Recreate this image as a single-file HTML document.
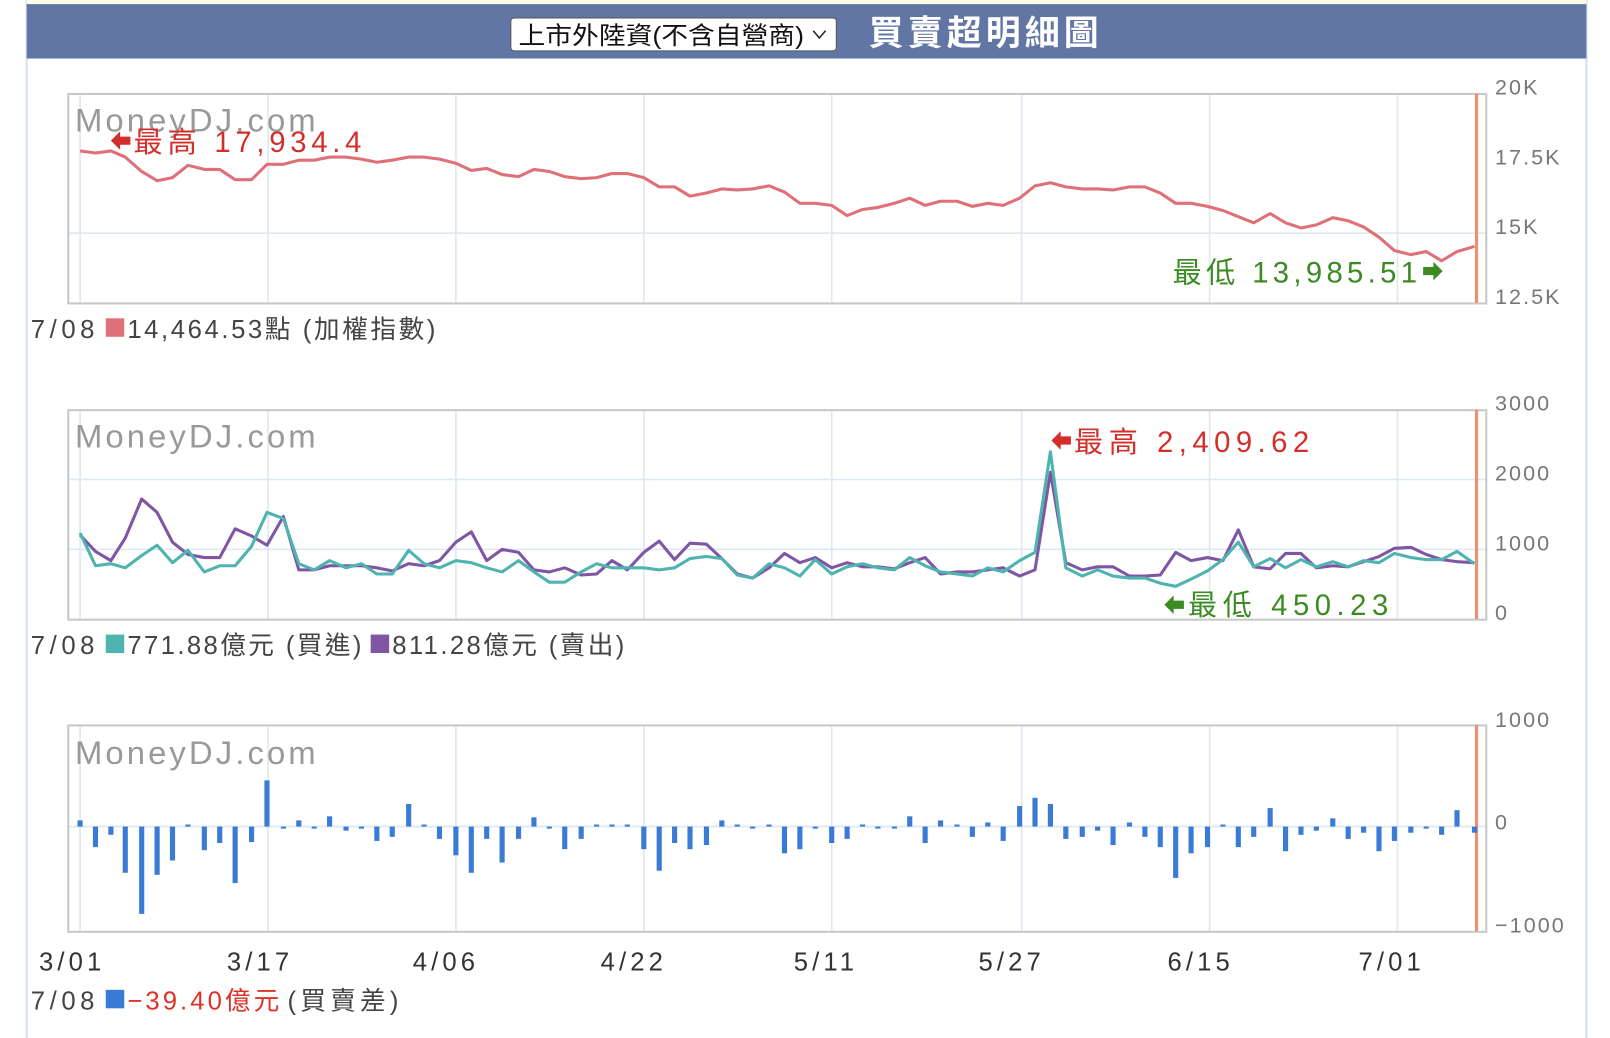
<!DOCTYPE html>
<html><head><meta charset="utf-8"><style>
html,body{margin:0;background:#fff;width:1610px;height:1038px;overflow:hidden;font-family:"Liberation Sans","Noto Sans CJK TC",sans-serif}
svg{position:absolute;left:0;top:0}
</style></head><body>
<svg id="s" width="1610" height="1038" xmlns="http://www.w3.org/2000/svg" font-family="Liberation Sans, Noto Sans CJK TC, sans-serif">
<g transform="scale(1.0268)">
<rect x="26" y="0" width="1519" height="1038" fill="#fff" stroke="#cfe0ee" stroke-width="2"/>
<rect x="26" y="0" width="1519" height="4" fill="#fffbe6"/>
<rect x="26" y="4" width="1519" height="53" fill="#6276a5"/>
<rect x="497.5" y="17.5" width="317" height="32" rx="3" fill="#fff" stroke="#555"/>
<text x="505" y="43" font-size="24" fill="#111" textLength="278" lengthAdjust="spacingAndGlyphs">上市外陸資(不含自營商)</text>
<path d="M792 30l6 7 6-7" fill="none" stroke="#222" stroke-width="1.5"/>
<text x="846" y="44" font-size="34" font-weight="bold" fill="#fff" textLength="224" lengthAdjust="spacing">買賣超明細圖</text>
<g id="grid"></g>
<g font-size="21" fill="#777" letter-spacing="2">
<text x="1456" y="92">20K</text><text x="1456" y="160">17.5K</text><text x="1456" y="228">15K</text><text x="1456" y="296">12.5K</text>
<text x="1456" y="400">3000</text><text x="1456" y="468">2000</text><text x="1456" y="536">1000</text><text x="1456" y="604">0</text>
<text x="1456" y="708">1000</text><text x="1456" y="808">0</text><text x="1456" y="908">−1000</text>
</g>
<g font-size="32" fill="#999" letter-spacing="3"><text x="73" y="128">MoneyDJ.com</text><text x="73" y="436">MoneyDJ.com</text><text x="73" y="744">MoneyDJ.com</text></g>
<g id="lines"></g>
<g font-size="28.5" lengthAdjust="spacing">
<path d="M108 137l9-9v5h10v8h-10v5z" fill="#d32f2a"/><text x="130" y="148" fill="#d32f2a" textLength="222">最高 17,934.4</text>
<text x="1142" y="275" fill="#3b8a22" textLength="238">最低 13,985.51</text><path d="M1405 264l-9-9v5h-10v8h10v5z" fill="#3b8a22"/>
<path d="M1024 429l9-9v5h10v8h-10v5z" fill="#d32f2a"/><text x="1046" y="440" fill="#d32f2a" textLength="229">最高 2,409.62</text>
<path d="M1134 589l9-9v5h10v8h-10v5z" fill="#3b8a22"/><text x="1157" y="599" fill="#3b8a22" textLength="195">最低 450.23</text>
</g>
<g font-size="25" fill="#333" letter-spacing="4">
<text x="38" y="945">3/01</text><text x="221" y="945">3/17</text><text x="402" y="945">4/06</text><text x="585" y="945">4/22</text><text x="773" y="945">5/11</text><text x="953" y="945">5/27</text><text x="1137" y="945">6/15</text><text x="1323" y="945">7/01</text>
</g>
<g font-size="25" fill="#444">
<text x="30" y="329" textLength="62">7/08</text><rect x="103" y="310" width="18" height="18" fill="#e07078"/><text x="124" y="329" textLength="300">14,464.53點 (加權指數)</text>
<text x="30" y="637" textLength="62">7/08</text><rect x="103" y="618" width="18" height="18" fill="#4fb3b0"/><text x="124" y="637" textLength="228">771.88億元 (買進)</text><rect x="361" y="618" width="18" height="18" fill="#7f56a3"/><text x="382" y="637" textLength="226">811.28億元 (賣出)</text>
<text x="30" y="983" textLength="62">7/08</text><rect x="103" y="964" width="18" height="18" fill="#3a7bd5"/><text x="124" y="983" fill="#e03025" textLength="148">−39.40億元</text><text x="280" y="983" textLength="108">(買賣差)</text>
</g>
</g>
</svg>
<script>
var NS="http://www.w3.org/2000/svg",g=document.getElementById('grid'),L=document.getElementById('lines');
function el(p,t,a){var e=document.createElementNS(NS,t);for(var k in a)e.setAttribute(k,a[k]);p.appendChild(e);return e}
var vx=[78,261,444,627,810,995,1178,1361];
[[91,295,[227]],[399,603,[467,535]],[706,907,[805]]].forEach(function(c){
 c[2].forEach(function(y){el(g,'line',{x1:66,x2:1448,y1:y,y2:y,stroke:'#dbe7f1','stroke-width':1.5})});
 vx.forEach(function(x){el(g,'line',{x1:x,x2:x,y1:c[0],y2:c[1],stroke:'#dbe7f1','stroke-width':1.5})});
 el(g,'rect',{x:66.5,y:c[0]+.5,width:1381,height:c[1]-c[0],fill:'none',stroke:'#c8c8c8','stroke-width':2});
 el(g,'line',{x1:1438,x2:1438,y1:c[0],y2:c[1],stroke:'#ee9070','stroke-width':3});
});
var xs=[78,93,108,122,138,153,168,183,199,214,229,245,260,276,291,306,321,337,352,367,382,398,413,428,444,459,474,489,505,520,535,550,566,581,596,611,627,642,657,672,688,703,718,733,749,764,779,794,810,825,840,855,871,886,901,916,932,947,962,977,993,1008,1023,1038,1054,1069,1084,1100,1115,1130,1145,1160,1176,1191,1206,1221,1237,1252,1267,1282,1298,1313,1328,1343,1358,1374,1389,1404,1419,1436];
var idx=[147,149,147,153,167,176,173,161,165,165,175,175,160,160,156,156,153,153,155,158,156,153,153,155,159,166,164,170,172,165,167,172,174,173,169,169,173,182,182,191,188,184,185,184,181,187,198,198,200,210,204,202,198,193,200,196,196,201,198,200,193,181,178,182,184,184,185,182,182,188,198,198,201,205,211,217,208,217,222,219,212,215,221,231,244,248,245,254,245,240];
var teal=[519,551,549,553,541,531,548,536,557,551,551,532,499,505,549,555,546,553,549,559,559,536,549,553,546,548,553,557,546,557,567,567,557,549,553,553,553,555,553,544,542,544,560,563,549,553,561,545,559,552,549,553,555,543,551,557,559,561,553,557,546,538,440,553,561,555,561,563,563,568,571,564,556,545,528,552,544,553,545,552,547,552,546,548,539,543,545,545,537,549];
var pur=[521,537,546,524,486,499,528,540,543,543,515,522,531,503,555,555,551,551,551,553,556,549,551,546,528,518,546,535,538,555,557,553,560,559,546,555,538,527,545,529,530,544,559,563,553,539,548,543,553,548,552,552,554,548,543,559,557,557,555,553,561,555,460,548,555,552,552,561,561,560,538,546,543,546,516,552,554,539,539,553,551,552,547,542,534,533,540,545,547,548];
var bar=[6,-20,-8,-45,-85,-47,-33,2,-23,-16,-55,-15,45,-2,6,-2,10,-4,-2,-14,-10,22,2,-12,-28,-45,-12,-35,-12,9,-2,-22,-12,2,2,2,-22,-43,-16,-22,-18,6,2,-2,2,-26,-22,-2,-16,-12,2,-2,-2,10,-16,6,2,-10,4,-14,20,28,22,-12,-10,-4,-18,4,-10,-20,-50,-26,-20,2,-20,-10,18,-24,-8,-4,8,-12,-6,-24,-14,-6,-2,-8,16,-6];
function pts(a){return xs.map(function(x,i){return x+','+a[i]}).join(' ')}
el(L,'polyline',{points:pts(idx),fill:'none',stroke:'#e07078','stroke-width':3,'stroke-linejoin':'round'});
el(L,'polyline',{points:pts(pur),fill:'none',stroke:'#7f56a3','stroke-width':3,'stroke-linejoin':'round'});
el(L,'polyline',{points:pts(teal),fill:'none',stroke:'#4fb3b0','stroke-width':3,'stroke-linejoin':'round'});
xs.forEach(function(x,i){var v=bar[i];el(L,'rect',{x:x-2.5,y:v>0?805-v:805,width:5,height:Math.abs(v),fill:'#3a7bd5'})});
</script>
</body></html>
